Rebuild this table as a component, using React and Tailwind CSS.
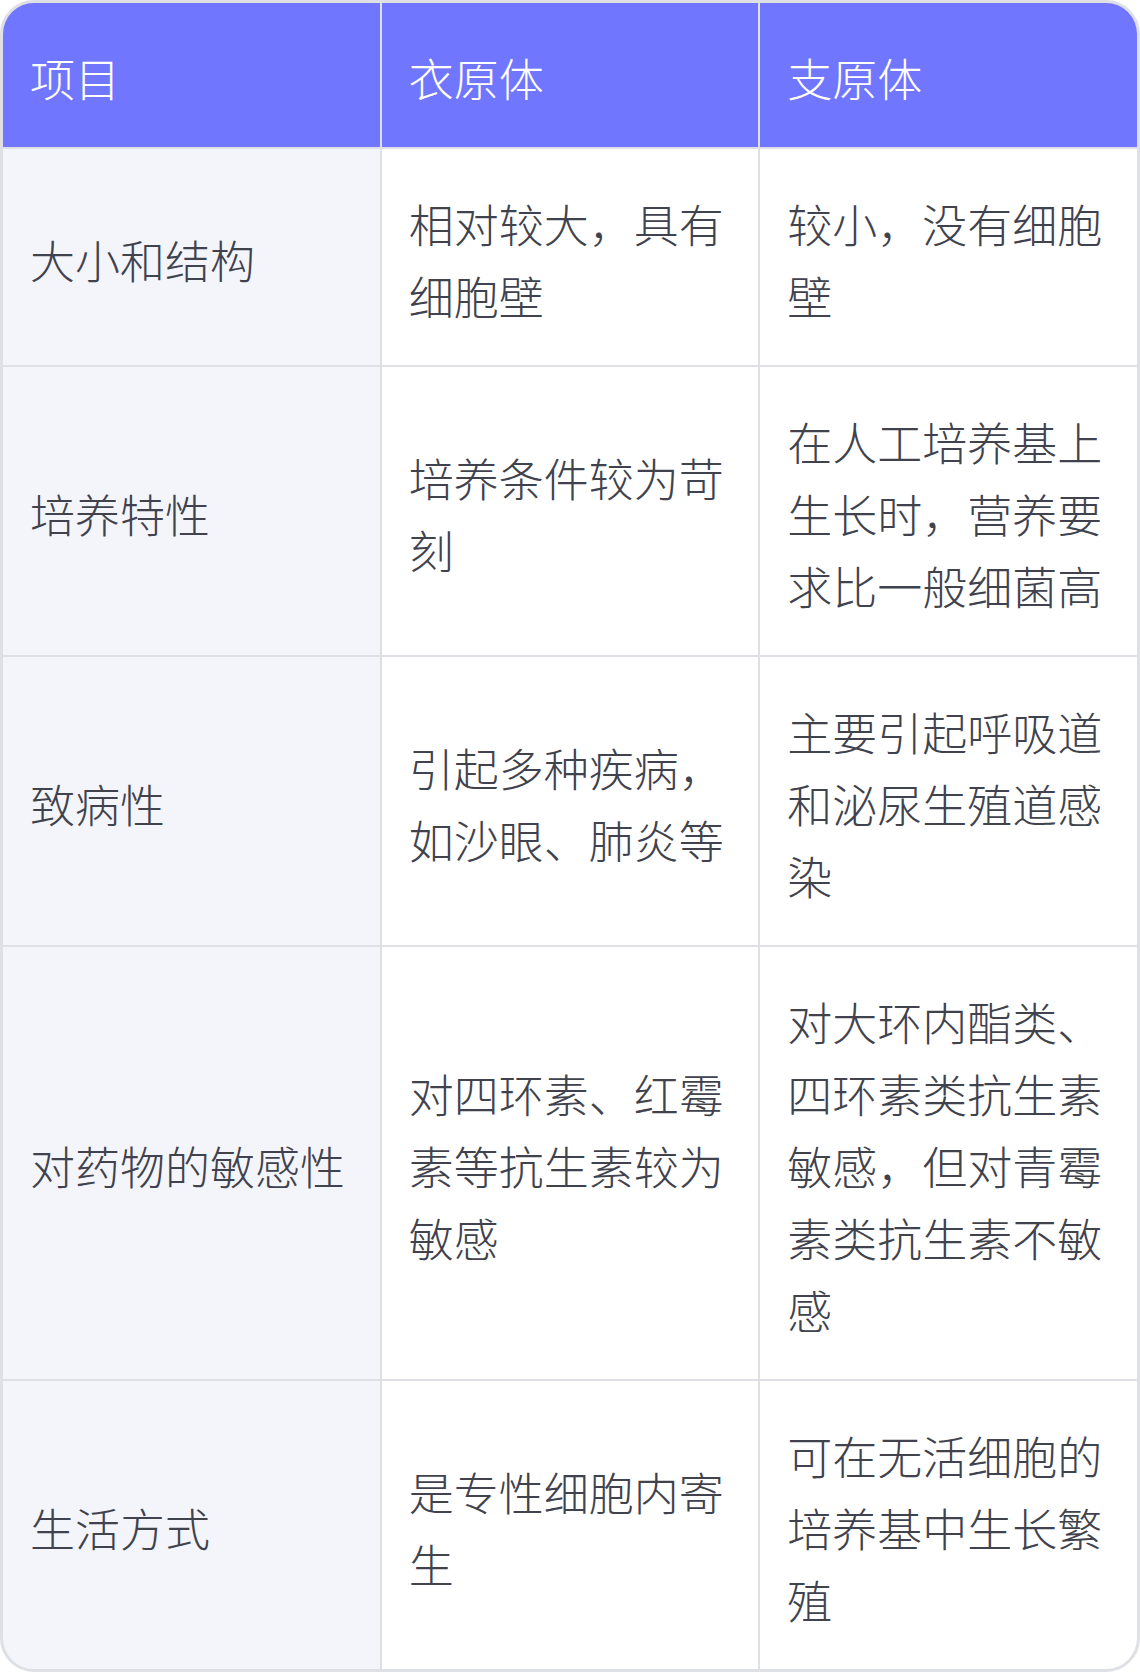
export default function App() {
  const rows = [
    ['大小和结构', '相对较大，具有细胞壁', '较小，没有细胞壁'],
    ['培养特性', '培养条件较为苛刻', '在人工培养基上生长时，营养要求比一般细菌高'],
    ['致病性', '引起多种疾病，如沙眼、肺炎等', '主要引起呼吸道和泌尿生殖道感染'],
    ['对药物的敏感性', '对四环素、红霉素等抗生素较为敏感', '对大环内酯类、四环素类抗生素敏感，但对青霉素类抗生素不敏感'],
    ['生活方式', '是专性细胞内寄生', '可在无活细胞的培养基中生长繁殖'],
  ];

  return (
    <div
      className="w-[1140px] bg-white font-light"
      style={{ fontFamily: '"Noto Sans CJK SC", "Noto Sans", sans-serif' }}
    >
      <div className="overflow-hidden rounded-[34px] border-[3px] border-[#dfe0e5] bg-[#dfe0e5]">
        <div className="grid grid-cols-3 gap-[2px] text-[45px] leading-[72px]">
          {['项目', '衣原体', '支原体'].map((h) => (
            <div key={h} className="bg-[#7176ff] pt-[39px] pb-[33px] pl-[27px] pr-6 text-white">
              {h}
            </div>
          ))}
          {rows.map((r) =>
            r.map((c, i) => (
              <div
                key={r[0] + i}
                className={`flex items-center pt-[39px] pb-[33px] pl-[27px] pr-6 text-[#40424d] ${
                  i === 0 ? 'bg-[#f4f5fa]' : 'bg-white'
                }`}
              >
                <span>{c}</span>
              </div>
            ))
          )}
        </div>
      </div>
    </div>
  );
}
